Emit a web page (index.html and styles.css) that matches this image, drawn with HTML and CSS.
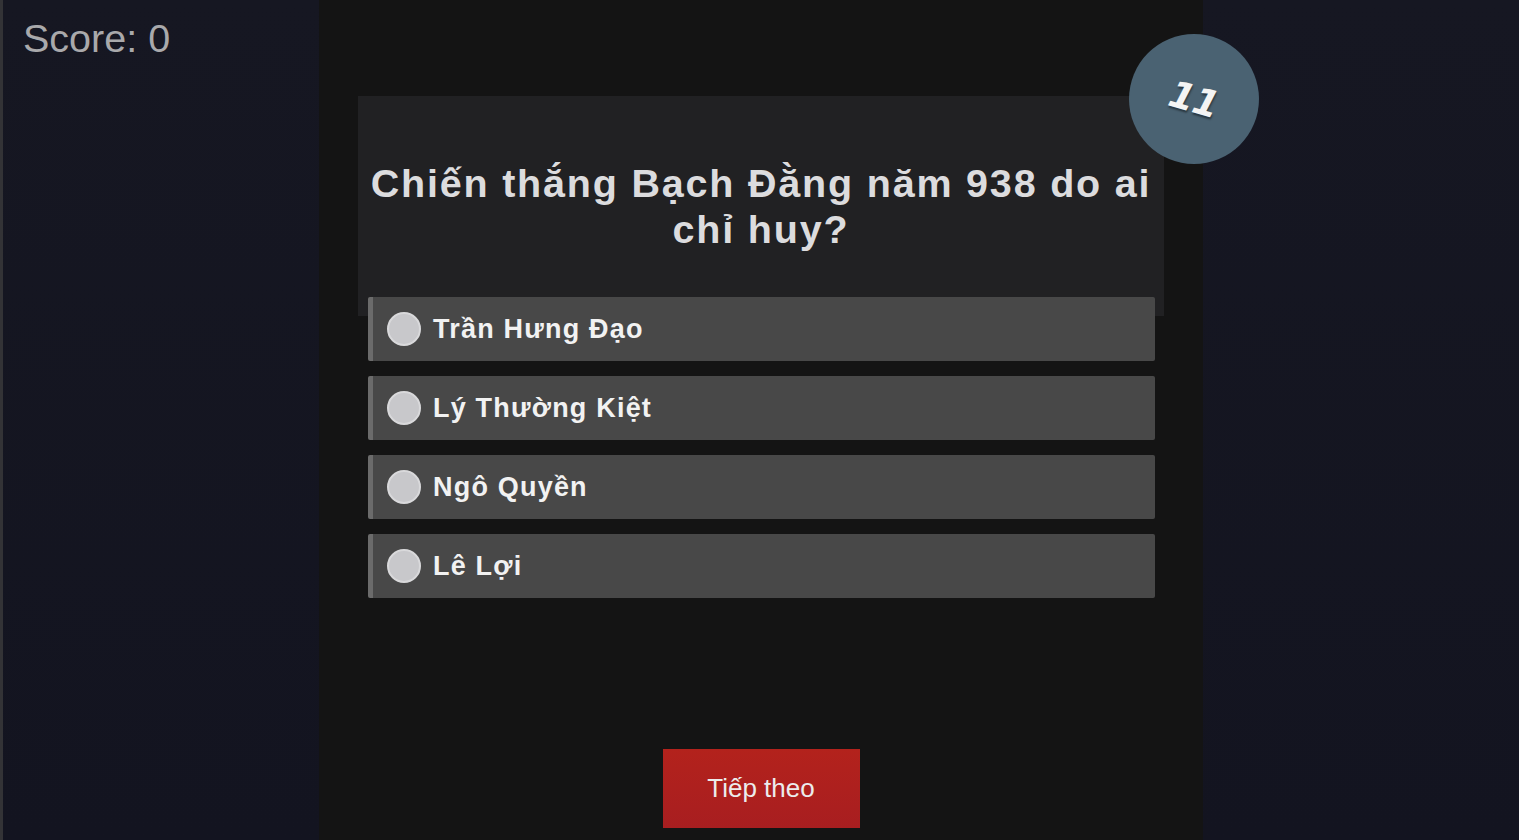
FILE: index.html
```html
<!DOCTYPE html>
<html lang="vi">
<head>
<meta charset="utf-8">
<title>Quiz</title>
<link rel="stylesheet" href="styles.css">
</head>
<body>
<div class="page">
  <div class="side">
    <div class="score">Score: 0</div>
  </div>
  <main class="panel">
    <section class="card">
      <h1 class="question">Chiến thắng Bạch Đằng năm 938 do ai chỉ huy?</h1>
      <div class="timer"><span class="timer-num">11</span></div>
    </section>
    <div class="options">
      <label class="option"><span class="radio"></span><span class="opt-text">Trần Hưng Đạo</span></label>
      <label class="option"><span class="radio"></span><span class="opt-text">Lý Thường Kiệt</span></label>
      <label class="option"><span class="radio"></span><span class="opt-text">Ngô Quyền</span></label>
      <label class="option"><span class="radio"></span><span class="opt-text">Lê Lợi</span></label>
    </div>
    <button class="next">Tiếp theo</button>
  </main>
  <div class="side"></div>
</div>
</body>
</html>
```
FILE: styles.css
```css
html, body {
  margin: 0;
  padding: 0;
  height: 100%;
}
body {
  background: linear-gradient(180deg, #161722 0%, #131420 100%);
  font-family: "Liberation Sans", Arial, sans-serif;
  overflow: hidden;
}
.page {
  display: grid;
  grid-template-columns: 1fr 884px 1fr;
  height: 840px;
  border-left: 3px solid #333336;
  box-sizing: border-box;
}
.side {
  min-width: 0;
}
.score {
  padding: 15px 0 0 20px;
  font-size: 39.5px;
  line-height: 46px;
  color: #a9a9ab;
}
.panel {
  background: #141414;
  display: flex;
  flex-direction: column;
  align-items: center;
  padding: 96px 0 12px;
  box-sizing: border-box;
}
.card {
  position: relative;
  width: 806px;
  height: 220px;
  background: #212123;
  display: flex;
  align-items: center;
  justify-content: center;
  box-sizing: border-box;
  padding: 0 6px;
}
.question {
  margin: 0;
  font-size: 39.5px;
  line-height: 46px;
  font-weight: bold;
  letter-spacing: 1.8px;
  color: #dcdcde;
  text-align: center;
}
.timer {
  position: absolute;
  top: -62px;
  right: -95px;
  width: 130px;
  height: 130px;
  border-radius: 50%;
  background: #4a6272;
  display: flex;
  align-items: center;
  justify-content: center;
}
.timer-num {
  display: inline-block;
  transform: rotate(16deg);
  font-family: "DejaVu Sans", sans-serif;
  font-style: italic;
  font-size: 37px;
  font-weight: bold;
  color: #f4f4f4;
  letter-spacing: -1px;
  text-shadow: 1px 2px 2px rgba(0,0,0,0.45);
}
.options {
  position: relative;
  margin-top: -19px;
  display: flex;
  flex-direction: column;
  gap: 15px;
  width: 787px;
  margin-left: 1px;
}
.option {
  display: flex;
  align-items: center;
  height: 64px;
  background: #484848;
  border-left: 5px solid #6b6b6b;
  border-radius: 2px;
  box-sizing: border-box;
  padding-left: 14px;
}
.radio {
  width: 34px;
  height: 34px;
  border-radius: 50%;
  background: #c8c8cb;
  border: 2px solid #d9d9db;
  box-sizing: border-box;
  flex: none;
}
.opt-text {
  margin-left: 12px;
  font-size: 27px;
  font-weight: bold;
  letter-spacing: 1.2px;
  color: #f2f2f2;
}
.next {
  margin-top: auto;
  width: 197px;
  height: 79px;
  border: none;
  background: linear-gradient(180deg, #b3221c 0%, #a81e20 100%);
  color: #ececec;
  font-family: "Liberation Sans", Arial, sans-serif;
  font-size: 26px;
  cursor: pointer;
}
```
